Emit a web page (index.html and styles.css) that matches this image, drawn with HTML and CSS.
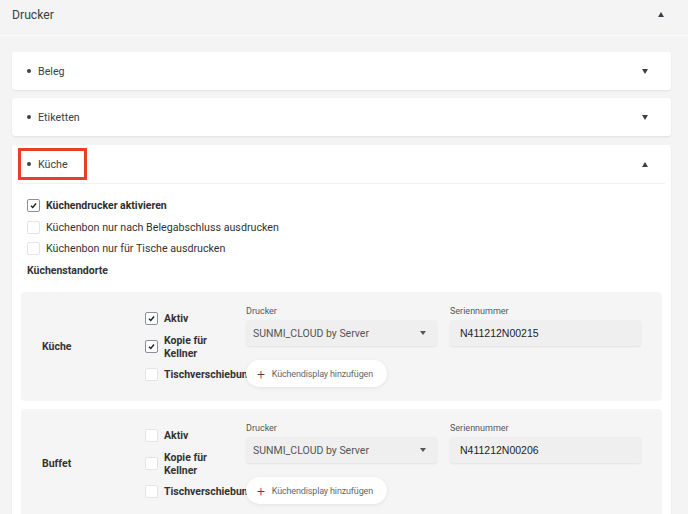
FILE: index.html
```html
<!DOCTYPE html>
<html lang="de">
<head>
<meta charset="utf-8">
<link rel="stylesheet" href="styles.css">
</head>
<body>
<div class="top">
  <span class="top-title">Drucker</span>
  <span class="tri up dark"></span>
</div>
<div class="page">
  <div class="card">
    <div class="card-head"><span class="dot"></span><span class="card-title">Beleg</span><span class="tri down"></span></div>
  </div>
  <div class="card">
    <div class="card-head"><span class="dot"></span><span class="card-title">Etiketten</span><span class="tri down"></span></div>
  </div>
  <div class="card open">
    <div class="card-head line">
      <span class="dot"></span><span class="card-title">Küche</span><span class="tri up"></span>
      <span class="mark"></span>
    </div>
    <div class="card-body">
      <div class="opts">
        <label class="opt bold"><span class="cb on"><svg viewBox="0 0 10 10"><path d="M2.2 5.2 L4.2 7.2 L7.8 2.8"/></svg></span>Küchendrucker aktivieren</label>
        <label class="opt"><span class="cb"></span>Küchenbon nur nach Belegabschluss ausdrucken</label>
        <label class="opt"><span class="cb"></span>Küchenbon nur für Tische ausdrucken</label>
      </div>
      <div class="section-title">Küchenstandorte</div>

      <div class="loc">
        <div class="loc-name">Küche</div>
        <div class="loc-checks">
          <div class="lc"><span class="cb on"><svg viewBox="0 0 10 10"><path d="M2.2 5.2 L4.2 7.2 L7.8 2.8"/></svg></span><span>Aktiv</span></div>
          <div class="lc"><span class="cb on"><svg viewBox="0 0 10 10"><path d="M2.2 5.2 L4.2 7.2 L7.8 2.8"/></svg></span><span>Kopie für<br>Kellner</span></div>
          <div class="lc"><span class="cb"></span><span class="nowrap">Tischverschiebung</span></div>
        </div>
        <div class="loc-right">
          <div class="fields">
            <div class="field">
              <div class="flabel">Drucker</div>
              <div class="select"><span>SUNMI_CLOUD by Server</span><span class="tri down sm"></span></div>
            </div>
            <div class="field">
              <div class="flabel">Seriennummer</div>
              <div class="input">N411212N00215</div>
            </div>
          </div>
          <div class="btn"><span class="plus">+</span>Küchendisplay hinzufügen</div>
        </div>
      </div>

      <div class="loc">
        <div class="loc-name">Buffet</div>
        <div class="loc-checks">
          <div class="lc"><span class="cb"></span><span>Aktiv</span></div>
          <div class="lc"><span class="cb"></span><span>Kopie für<br>Kellner</span></div>
          <div class="lc"><span class="cb"></span><span class="nowrap">Tischverschiebung</span></div>
        </div>
        <div class="loc-right">
          <div class="fields">
            <div class="field">
              <div class="flabel">Drucker</div>
              <div class="select"><span>SUNMI_CLOUD by Server</span><span class="tri down sm"></span></div>
            </div>
            <div class="field">
              <div class="flabel">Seriennummer</div>
              <div class="input">N411212N00206</div>
            </div>
          </div>
          <div class="btn"><span class="plus">+</span>Küchendisplay hinzufügen</div>
        </div>
      </div>
    </div>
  </div>
</div>
</body>
</html>
```

FILE: styles.css
```css
html, body {
  margin: 0;
  padding: 0;
  background: #f4f4f4;
  height: 514px;
  overflow: hidden;
}
body {
  font-family: Roboto, "Liberation Sans", sans-serif;
  color: #333;
}
.top {
  height: 36px;
  display: flex;
  align-items: center;
  justify-content: space-between;
  padding: 0 24px 0 12px;
  border-bottom: 1px solid #fbfbfb;
  box-sizing: border-box;
}
.top-title {
  font-size: 12.2px;
  color: #3a3f45;
  margin-top: -6px;
}
.top .tri {
  margin-top: -6px;
}
.tri {
  width: 0;
  height: 0;
  border-left: 3.5px solid transparent;
  border-right: 3.5px solid transparent;
}
.tri.up { border-bottom: 5px solid #3a404a; }
.tri.down { border-top: 5px solid #3a404a; }
.tri.sm.down { border-top-color: #555; border-left-width: 3px; border-right-width: 3px; border-top-width: 4px; }
.page {
  padding: 16px 17px 0 12px;
}
.card {
  background: #fff;
  border-radius: 3px;
  box-shadow: 0 1px 2px rgba(0,0,0,0.08);
  margin-bottom: 8px;
}
.card + .card.open { margin-top: 9px; }
.card-head {
  height: 38px;
  display: flex;
  align-items: center;
  padding: 0 23px 0 15px;
  position: relative;
}
.card-head.line {
  border-bottom: 1px solid #f1f1f1;
  margin: 0 6px 0 5px;
  padding: 0 17px 0 10px;
}
.dot {
  width: 4px;
  height: 4px;
  border-radius: 50%;
  background: #3d434b;
  margin-right: 7px;
}
.card-title {
  flex: 1;
  font-size: 10.7px;
  color: #3a3f45;
}
.mark {
  position: absolute;
  left: 1px;
  top: 3px;
  width: 63px;
  height: 26px;
  border: 3px solid #ea3f27;
}
.card-body {
  padding: 15px 9px 20px 9px;
}
.opts {
  display: flex;
  flex-direction: column;
  gap: 8.5px;
  padding-left: 6px;
}
.opt {
  display: flex;
  align-items: center;
  font-size: 10.7px;
  color: #333;
  height: 13px;
}
.opt.bold { font-weight: bold; color: #2e2e2e; font-size: 10.5px; }
.cb {
  width: 11px;
  height: 11px;
  border: 1px solid #e4e4e4;
  border-radius: 2px;
  background: #fff;
  margin-right: 6px;
  flex: none;
  display: flex;
  align-items: center;
  justify-content: center;
}
.cb.on { border-color: #8a8f98; }
.cb svg {
  width: 9px;
  height: 9px;
  fill: none;
  stroke: #222;
  stroke-width: 1.6;
}
.section-title {
  font-weight: bold;
  font-size: 10.5px;
  color: #333;
  padding-left: 6px;
  margin-top: 9px;
  height: 13px;
  line-height: 13px;
  margin-bottom: 15px;
}
.loc {
  background: #f5f5f5;
  border-radius: 4px;
  display: flex;
  align-items: center;
  height: 109px;
  margin-bottom: 8px;
}
.loc-name {
  width: 124px;
  flex: none;
  padding-left: 21px;
  box-sizing: border-box;
  font-weight: bold;
  font-size: 10.5px;
  color: #333;
}
.loc-checks {
  width: 101px;
  flex: none;
  display: flex;
  flex-direction: column;
  gap: 8.5px;
  font-weight: bold;
  font-size: 10.5px;
  line-height: 13px;
  color: #333;
}
.lc {
  display: flex;
  align-items: center;
}
.nowrap { white-space: nowrap; }
.loc-right {
  align-self: stretch;
  padding-top: 13px;
  position: relative;
  z-index: 1;
  flex: none;
}
.fields {
  display: flex;
  gap: 13px;
}
.field { width: 191px; }
.flabel {
  font-size: 9px;
  line-height: 12px;
  color: #555;
  margin-bottom: 3px;
}
.select, .input {
  height: 26px;
  background: #efefef;
  border-radius: 3px;
  box-shadow: 0 1px 2px rgba(0,0,0,0.08);
  display: flex;
  align-items: center;
  box-sizing: border-box;
}
.select {
  padding: 0 11px 0 7px;
  justify-content: space-between;
  color: #555;
  font-size: 10.5px;
}
.input {
  padding: 0 10px;
  color: #1e1e1e;
  font-family: "Liberation Sans", Arial, sans-serif;
  font-size: 10.5px;
}
.btn {
  margin-top: 14px;
  width: 141px;
  height: 27px;
  background: #fff;
  border-radius: 14px;
  box-shadow: 0 1px 4px rgba(0,0,0,0.08);
  display: flex;
  align-items: center;
  box-sizing: border-box;
  padding-left: 11px;
  font-size: 9px;
  letter-spacing: -0.15px;
  color: #666;
  white-space: nowrap;
}
.plus {
  font-size: 14px;
  font-weight: 300;
  color: #444;
  margin-right: 7px;
  line-height: 1;
}
```
